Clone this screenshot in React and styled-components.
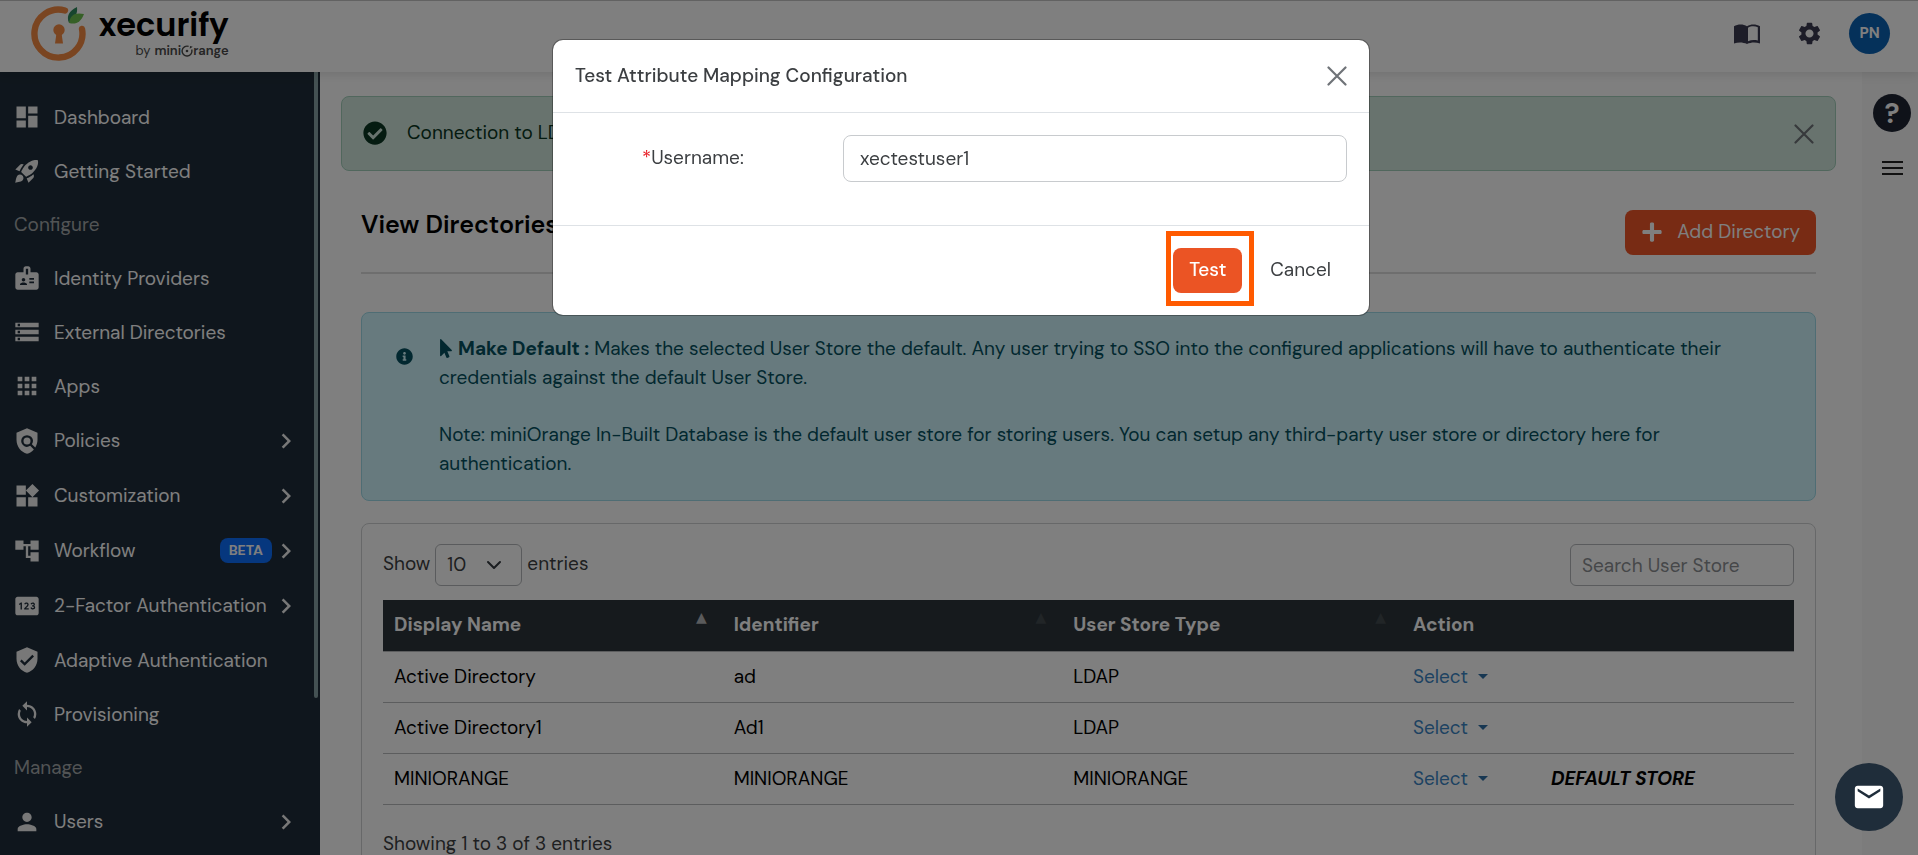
import React from "react";
import styled, { createGlobalStyle } from "styled-components";
import {
  MdDashboard,
  MdRocketLaunch,
  MdBadge,
  MdStorage,
  MdApps,
  MdPolicy,
  MdWidgets,
  MdAccountTree,
  MdPin,
  MdVerifiedUser,
  MdSync,
  MdPerson,
  MdChevronRight,
  MdSettings,
  MdEmail,
} from "react-icons/md";
import { FaPlus, FaMousePointer, FaInfoCircle, FaCheckCircle } from "react-icons/fa";

const menu = [
  { icon: MdDashboard, name: "Dashboard" },
  { icon: MdRocketLaunch, name: "Getting Started" },
  { label: "Configure" },
  { icon: MdBadge, name: "Identity Providers" },
  { icon: MdStorage, name: "External Directories" },
  { icon: MdApps, name: "Apps" },
  { icon: MdPolicy, name: "Policies", more: true },
  { icon: MdWidgets, name: "Customization", more: true },
  { icon: MdAccountTree, name: "Workflow", more: true, badge: "BETA" },
  { icon: MdPin, name: "2-Factor Authentication", more: true },
  { icon: MdVerifiedUser, name: "Adaptive Authentication" },
  { icon: MdSync, name: "Provisioning" },
  { label: "Manage" },
  { icon: MdPerson, name: "Users", more: true },
];

const stores = [
  { name: "Active Directory", identifier: "ad", type: "LDAP" },
  { name: "Active Directory1", identifier: "Ad1", type: "LDAP" },
  { name: "MINIORANGE", identifier: "MINIORANGE", type: "MINIORANGE", isDefault: true },
];

const CloseIcon = () => (
  <svg width="20" height="20" viewBox="0 0 20 20" aria-hidden="true">
    <path d="M1.5 1.5 18.5 18.5M18.5 1.5 1.5 18.5" stroke="currentColor" strokeWidth="2.2" strokeLinecap="round" />
  </svg>
);

const BookIcon = () => (
  <svg width="26" height="20" viewBox="0 0 26 20" aria-hidden="true">
    <path
      d="M0 2.2C3.8 0 9.2-.2 13 2.2 16.8-.2 22.2 0 26 2.2V19.5C22 18 17 18 13 20 9 18 4 18 0 19.5Z"
      fill="currentColor"
    />
    <path d="M14 3.7C17 2 21 2 23.8 3.3V16.6C20.5 15.8 17 16 14 17.2Z" fill="#fff" />
  </svg>
);

const LogoMark = () => (
  <svg width="56" height="56" viewBox="0 0 56 56" aria-hidden="true">
    <path d="M34 4.5A24 24 0 1 0 51 23" fill="none" stroke="#f58a42" strokeWidth="6.4" strokeLinecap="round" />
    <circle cx="28" cy="24" r="5.7" fill="#f58a42" />
    <path d="M25.500 27H30.500L32 37.500H24Z" fill="#f58a42" />
    <path d="M46 1C38 5 35 10 38 17 43 14 47 8 46 1Z" fill="#2f8a5c" />
    <path d="M53 8C44 6 39 9 38 17 45 19 50 16 53 8Z" fill="#6dc04f" />
  </svg>
);

const MiniO = () => (
  <svg width="12" height="12" viewBox="0 0 11 11" aria-hidden="true">
    <path d="M7 1.3A4.5 4.5 0 1 0 9.8 4.2" fill="none" stroke="currentColor" strokeWidth="1.3" />
    <circle cx="5.5" cy="5.5" r="1.2" fill="currentColor" />
    <path d="M8 3.5 8.3 1 10.8 1.5Z" fill="currentColor" />
  </svg>
);

const App = () => {
  return (
    <>
      <GlobalStyle />
      <Page>
        <Header>
          <Logo href="#">
            <LogoMark />
            <Brand>
              <BrandName>xecurify</BrandName>
              <BrandBy>
                <span>by</span>
                <b>mini</b>
                <MiniO />
                <b>range</b>
              </BrandBy>
            </Brand>
          </Logo>
          <HeaderActions>
            <HeaderButton aria-label="Documentation">
              <BookIcon />
            </HeaderButton>
            <HeaderButton aria-label="Settings">
              <MdSettings size={27} />
            </HeaderButton>
            <Avatar>PN</Avatar>
          </HeaderActions>
        </Header>
        <Body>
          <Sidebar>
            <Nav>
              {menu.map((item) => {
                if (item.label) {
                  return <NavLabel key={item.label}>{item.label}</NavLabel>;
                }
                const Icon = item.icon;
                return (
                  <NavItem href="#" key={item.name} $more={item.more}>
                    <Icon size={28} />
                    <span>{item.name}</span>
                    {item.badge && <Badge>{item.badge}</Badge>}
                    {item.more && <MdChevronRight size={30} />}
                  </NavItem>
                );
              })}
            </Nav>
            <ScrollThumb />
          </Sidebar>

          <Main>
            <SuccessAlert>
              <FaCheckCircle size={24} />
              <p>Connection to LDAP server successful.</p>
              <CloseButton aria-label="Dismiss">
                <CloseIcon />
              </CloseButton>
            </SuccessAlert>
            <Content>
              <TitleBar>
                <h1>View Directories</h1>
                <PrimaryButton>
                  <FaPlus size={22} />
                  Add Directory
                </PrimaryButton>
              </TitleBar>
              <InfoBox>
                <FaInfoCircle size={17} />
                <div>
                  <p>
                    <FaMousePointer size={19} /> <b>Make Default :</b> Makes the selected User Store the default. Any
                    user trying to SSO into the configured applications will have to authenticate their credentials
                    against the default User Store.
                  </p>
                  <p>
                    Note: miniOrange In-Built Database is the default user store for storing users. You can setup any
                    third-party user store or directory here for authentication.
                  </p>
                </div>
              </InfoBox>
              <Card>
                <TableTools>
                  <label>
                    Show
                    <LengthSelect defaultValue="10">
                      <option>10</option>
                      <option>25</option>
                      <option>50</option>
                    </LengthSelect>
                    entries
                  </label>
                  <SearchInput type="search" aria-label="Search User Store" placeholder="Search User Store" />
                </TableTools>
                <Table>
                  <thead>
                    <tr>
                      <SortTh $active>Display Name</SortTh>
                      <SortTh>Identifier</SortTh>
                      <SortTh>User Store Type</SortTh>
                      <th>Action</th>
                    </tr>
                  </thead>
                  <tbody>
                    {stores.map((store) => (
                      <tr key={store.name}>
                        <td>{store.name}</td>
                        <td>{store.identifier}</td>
                        <td>{store.type}</td>
                        <td>
                          <ActionCell>
                            <SelectLink>Select</SelectLink>
                            {store.isDefault && <DefaultTag>DEFAULT STORE</DefaultTag>}
                          </ActionCell>
                        </td>
                      </tr>
                    ))}
                  </tbody>
                </Table>
                <TableInfo>Showing 1 to 3 of 3 entries</TableInfo>
              </Card>
            </Content>
          </Main>

          <Rail>
            <HelpButton aria-label="Help">?</HelpButton>
            <RailMenu aria-label="Menu">
              <i />
              <i />
              <i />
            </RailMenu>
          </Rail>
        </Body>
      </Page>

      <Backdrop>
        <Modal role="dialog" aria-labelledby="modal-title">
          <ModalHeader>
            <h2 id="modal-title">Test Attribute Mapping Configuration</h2>
            <CloseButton aria-label="Close">
              <CloseIcon />
            </CloseButton>
          </ModalHeader>
          <ModalBody>
            <label htmlFor="username">
              <span>*</span>Username:
            </label>
            <input id="username" type="text" defaultValue="xectestuser1" />
          </ModalBody>
          <ModalFooter>
            <Highlight>
              <TestButton>Test</TestButton>
            </Highlight>
            <CancelButton>Cancel</CancelButton>
          </ModalFooter>
        </Modal>
      </Backdrop>
      <MailButton aria-label="Contact us">
        <MdEmail size={34} />
      </MailButton>
    </>
  );
};

export default App;

const GlobalStyle = createGlobalStyle`
*{
  box-sizing: border-box;
}
body{
  margin: 0;
  overflow: hidden;
  background: #fff;
  color: #3c3f42;
  font-family: "DM Sans", Roboto, "Liberation Sans", sans-serif;
  font-size: 19px;
  line-height: 29px;
}
h1, h2, p{
  margin: 0;
}
button, input, select{
  font: inherit;
  color: inherit;
}
button{
  border: 0;
  padding: 0;
  background: none;
  cursor: pointer;
}
a{
  color: inherit;
  text-decoration: none;
}
`;
const Page = styled.div`
height: 100vh;
display: flex;
flex-direction: column;
overflow: hidden;
`;
const Header = styled.header`
display: flex;
align-items: center;
justify-content: space-between;
flex: none;
height: 72px;
padding: 0 28px 6px 31px;
border-top: 1px solid #c4c4c4;
box-shadow: 0 2px 10px rgba(0, 0, 0, 0.12);
position: relative;
z-index: 1;
`;
const Logo = styled.a`
display: flex;
align-items: center;
gap: 12px;
`;
const Brand = styled.div`
display: flex;
flex-direction: column;
align-items: flex-end;
color: #000;
`;
const BrandName = styled.span`
font-family: "Poppins", "Open Sans", sans-serif;
font-size: 32px;
font-weight: 600;
line-height: 34px;
`;
const BrandBy = styled.span`
display: flex;
align-items: center;
font-size: 13px;
line-height: 18px;
color: #4a4a4a;
b{
  font-weight: 600;
}
span{
  margin-right: 4px;
}
`;
const HeaderActions = styled.div`
display: flex;
align-items: center;
gap: 18px;
`;
const HeaderButton = styled.button`
display: flex;
justify-content: center;
width: 44px;
color: #3b3a50;
`;
const Avatar = styled.button`
width: 41px;
height: 41px;
border-radius: 50%;
background: #0b63b5;
color: #fff;
font-size: 15px;
font-weight: 700;
`;
const Body = styled.div`
display: flex;
flex: 1;
min-height: 0;
`;
const Sidebar = styled.aside`
display: flex;
flex: none;
width: 320px;
padding-right: 2px;
background: #1f2d3a;
color: #fff;
`;
const Nav = styled.nav`
flex: 1;
padding-top: 18px;
overflow: hidden;
`;
const NavLabel = styled.div`
padding-left: 14px;
line-height: 53px;
color: #a4a8ab;
`;
const NavItem = styled.a`
display: flex;
align-items: center;
height: ${(props) => (props.$more ? "55px" : "54px")};
padding: 0 13px;
span{
  flex: 1;
  margin-left: 13px;
  white-space: nowrap;
}
svg{
  flex: none;
  color: #f0f0f0;
}
`;
const Badge = styled.em`
margin-right: -1px;
padding: 0 9px;
border-radius: 8px;
background: #0d6efd;
font-size: 14px;
font-style: normal;
font-weight: 700;
line-height: 25px;
`;
const ScrollThumb = styled.div`
width: 4px;
height: 80%;
border-radius: 0 0 4px 4px;
background: #89a3a6;
`;
const Main = styled.main`
flex: 1;
min-width: 0;
padding: 24px 26px 0 21px;
`;
const SuccessAlert = styled.div`
display: flex;
align-items: center;
height: 75px;
padding: 0 21px;
border: 1px solid #a3cfbb;
border-radius: 8px;
background: #d1e7dd;
color: #0a3622;
p{
  flex: 1;
  margin: 0 0 2px 20px;
}
> svg{
  margin-bottom: 2px;
}
`;
const CloseButton = styled.button`
display: flex;
color: #6f7378;
`;
const Content = styled.div`
padding: 0 20px;
`;
const TitleBar = styled.div`
display: flex;
align-items: center;
justify-content: space-between;
margin-top: 39px;
padding-bottom: 17px;
border-bottom: 2px solid #dcdcdc;
h1{
  margin-bottom: 16px;
  color: #000;
  font-size: 25px;
  font-weight: 600;
  line-height: 28px;
}
`;
const PrimaryButton = styled.button`
display: flex;
align-items: center;
gap: 14px;
height: 45px;
padding: 0 16px 2px;
border-radius: 8px;
background: #f05628;
color: #fff;
`;
const InfoBox = styled.div`
display: flex;
gap: 26px;
margin-top: 38px;
padding: 21px 80px 22px 34px;
border: 1px solid #9edbe8;
border-radius: 8px;
background: #cff4fc;
color: #055160;
> svg{
  flex: none;
  margin-top: 14px;
}
p + p{
  margin-top: 28px;
}
p svg{
  width: 14px;
  vertical-align: -3px;
}
`;
const Card = styled.section`
margin-top: 22px;
padding: 20px 21px;
border: 1px solid #ced0d2;
border-radius: 8px;
`;
const TableTools = styled.div`
display: flex;
justify-content: space-between;
align-items: center;
margin-bottom: 14px;
label{
  display: flex;
  gap: 5px;
  line-height: 40px;
}
`;
const LengthSelect = styled.select`
width: 87px;
height: 42px;
padding: 0 11px;
appearance: none;
border: 1px solid #b4b7ba;
border-radius: 6px;
background: url("data:image/svg+xml,%3Csvg xmlns='http://www.w3.org/2000/svg' viewBox='0 0 16 16'%3E%3Cpath fill='none' stroke='%23343a40' stroke-linecap='round' stroke-linejoin='round' stroke-width='2' d='m2 5 6 6 6-6'/%3E%3C/svg%3E") no-repeat right 19px center / 16px;
`;
const SearchInput = styled.input`
width: 224px;
height: 42px;
padding: 0 11px;
border: 1px solid #b4b7ba;
border-radius: 6px;
&::placeholder{
  color: #8c8f93;
}
`;
const Table = styled.table`
width: 100%;
table-layout: fixed;
border-collapse: collapse;
text-align: left;
color: #000;
th{
  height: 51px;
  padding: 0 11px 1px;
  border-bottom: 1px solid #b9bbbd;
  background: #2c343a;
  color: #fff;
  font-weight: 700;
}
th:last-child{
  width: 392px;
}
td{
  height: 51px;
  padding: 0 11px;
  border-bottom: 1px solid #b9bbbd;
}
`;
const SortTh = styled.th`
&::after{
  content: "▲";
  float: right;
  margin-right: 5px;
  font-family: "DejaVu Sans", sans-serif;
  font-size: 14px;
  line-height: 15px;
  color: ${(props) => (props.$active ? "#b4b6b8" : "#424a4f")};
}
`;
const ActionCell = styled.div`
display: flex;
align-items: center;
gap: 63px;
`;
const SelectLink = styled.button`
display: flex;
align-items: center;
gap: 10px;
color: #3b85c4;
&::after{
  content: "";
  border: 5px solid transparent;
  border-top-color: #2f6ea5;
  border-bottom: 0;
}
`;
const DefaultTag = styled.em`
font-weight: 700;
`;
const TableInfo = styled.p`
margin-top: 24px;
`;
const Rail = styled.aside`
display: flex;
flex-direction: column;
align-items: center;
flex: none;
gap: 29px;
width: 56px;
padding: 22px 0 0 4px;
background: #f8f8f8;
`;
const HelpButton = styled.button`
width: 38px;
height: 38px;
border-radius: 50%;
background: #1f2433;
color: #fff;
font-size: 28px;
font-weight: 700;
`;
const RailMenu = styled.button`
display: flex;
flex-direction: column;
gap: 4px;
width: 21px;
i{
  height: 2px;
  background: #222;
}
`;
const Backdrop = styled.div`
position: fixed;
inset: 0;
z-index: 10;
display: flex;
align-items: flex-start;
justify-content: center;
padding: 40px 16px 16px 20px;
background: rgba(0, 0, 0, 0.5);
`;
const Modal = styled.div`
width: 100%;
max-width: 816px;
border-radius: 10px;
background: #fff;
box-shadow: 0 0 0 1px rgba(0, 0, 0, 0.3);
`;
const ModalHeader = styled.div`
display: flex;
align-items: center;
justify-content: space-between;
height: 73px;
padding: 0 22px;
border-bottom: 1px solid #dee2e6;
h2{
  margin-bottom: 2px;
  font-size: 19px;
  font-weight: 500;
}
`;
const ModalBody = styled.div`
display: grid;
grid-template-columns: 201px 504px;
justify-content: end;
padding: 22px 22px 43px;
border-bottom: 1px solid #dee2e6;
label{
  padding-top: 8px;
}
label span{
  color: #e8222a;
}
input{
  height: 47px;
  padding: 0 16px;
  border: 1px solid #c8cbce;
  border-radius: 8px;
}
`;
const ModalFooter = styled.div`
display: flex;
align-items: center;
justify-content: flex-end;
gap: 16px;
padding: 5px 38px 9px 22px;
`;
const Highlight = styled.div`
padding: 12px 7px 8px 2px;
border: 5px solid #ff5a00;
`;
const TestButton = styled.button`
display: block;
width: 69px;
height: 45px;
padding-bottom: 2px;
border-radius: 8px;
background: #eb5424;
color: #fff;
font-weight: 500;
`;
const CancelButton = styled.button`
padding-top: 2px;
color: #3c3f42;
`;
const MailButton = styled.button`
position: fixed;
right: 15px;
bottom: 24px;
z-index: 20;
display: flex;
align-items: center;
justify-content: center;
width: 68px;
height: 68px;
border-radius: 50%;
background: #1f2d3a;
color: #fff;
`;
